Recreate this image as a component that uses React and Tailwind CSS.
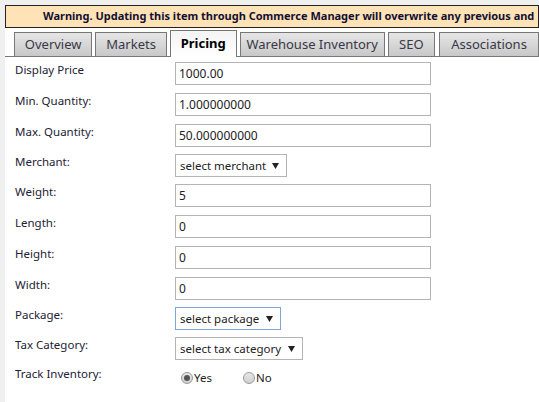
import React from "react";

const font = { fontFamily: '"Noto Sans", Tahoma, sans-serif' };

function Tab({ label, active, w }) {
  if (active) {
    return (
      <div
        className={`h-[27px] -mb-px border border-b-0 border-[#777] bg-gradient-to-b from-[#f4f4f4] to-white flex items-center justify-center text-[13px] font-bold text-black ${w}`}
      >
        {label}
      </div>
    );
  }
  return (
    <div
      className={`h-[24px] border border-b-0 border-[#777] bg-gradient-to-b from-[#e6e6e6] to-[#c8c8c8] flex items-center justify-center text-[13px] text-[#383848] ${w}`}
    >
      {label}
    </div>
  );
}

function Row({ label, h, children }) {
  return (
    <div className={`flex items-start ${h}`}>
      <div className="w-[170px] pl-[10px] text-[11.5px] text-[#222233] leading-[16px]">{label}</div>
      {children}
    </div>
  );
}

function TextInput({ value }) {
  return (
    <div className="w-[256px] h-[23px] border border-[#b4b4b4] bg-white flex items-center px-[3px] text-[12px] text-[#222]">
      {value}
    </div>
  );
}

function Arrow() {
  return (
    <svg width="7" height="6" viewBox="0 0 7 6" className="shrink-0">
      <path d="M0 0 H7 L3.5 6 Z" fill="#222" />
    </svg>
  );
}

function Select({ text, w, focused }) {
  return (
    <div
      className={`${w} h-[23px] border ${focused ? "border-[#7ea4dc]" : "border-[#b4b4b4]"} bg-white flex items-center justify-between pl-[4px] pr-[7px] text-[11.5px] text-[#222] whitespace-nowrap`}
    >
      <span>{text}</span>
      <Arrow />
    </div>
  );
}

function Radio({ checked }) {
  return (
    <span className="w-[12px] h-[12px] rounded-full border border-[#999] bg-gradient-to-b from-[#e8e8e8] to-[#d0d0d0] flex items-center justify-center">
      {checked && <span className="w-[6px] h-[6px] rounded-full bg-[#555]" />}
    </span>
  );
}

export default function App() {
  return (
    <div className="w-[539px] h-[402px] bg-[#f0f0f0] pl-[5px] pt-[5px] overflow-hidden" style={font}>
      <div className="bg-white h-full">
        <div className="h-[23px] border border-[#222] bg-[#ffe2b5] flex items-center pl-[37px] text-[11px] font-bold text-[#111133] whitespace-nowrap overflow-hidden">
          Warning. Updating this item through Commerce Manager will overwrite any previous and
        </div>
        <div className="mt-[2px] h-[27px] flex items-end gap-[3px] pl-[9px] border-b border-[#777] whitespace-nowrap">
          <Tab label="Overview" w="w-[81px]" />
          <Tab label="Markets" w="w-[74px]" />
          <Tab label="Pricing" w="w-[69px]" active />
          <Tab label="Warehouse Inventory" w="w-[150px]" />
          <Tab label="SEO" w="w-[49px]" />
          <Tab label="Associations" w="w-[100px] shrink-0 ml-[1px]" />
        </div>
        <div className="pt-[5px]">
          <Row label="Display Price" h="h-[31px]">
            <TextInput value="1000.00" />
          </Row>
          <Row label="Min. Quantity:" h="h-[31px]">
            <TextInput value="1.000000000" />
          </Row>
          <Row label="Max. Quantity:" h="h-[30px]">
            <TextInput value="50.000000000" />
          </Row>
          <Row label="Merchant:" h="h-[30px]">
            <Select text="select merchant" w="w-[112px]" />
          </Row>
          <Row label="Weight:" h="h-[31px]">
            <TextInput value="5" />
          </Row>
          <Row label="Length:" h="h-[31px]">
            <TextInput value="0" />
          </Row>
          <Row label="Height:" h="h-[31px]">
            <TextInput value="0" />
          </Row>
          <Row label="Width:" h="h-[30px]">
            <TextInput value="0" />
          </Row>
          <Row label="Package:" h="h-[30px]">
            <Select text="select package" w="w-[106px]" focused />
          </Row>
          <Row label="Tax Category:" h="h-[29px]">
            <Select text="select tax category" w="w-[128px]" />
          </Row>
          <Row label="Track Inventory:" h="h-[31px]">
            <div className="flex items-center pt-[4px] pl-[6px] text-[11.5px] text-[#222] leading-[16px]">
              <Radio checked />
              <span className="ml-[1px]">Yes</span>
              <span className="ml-[31px]"><Radio /></span>
              <span className="ml-[1px]">No</span>
            </div>
          </Row>
        </div>
      </div>
    </div>
  );
}
